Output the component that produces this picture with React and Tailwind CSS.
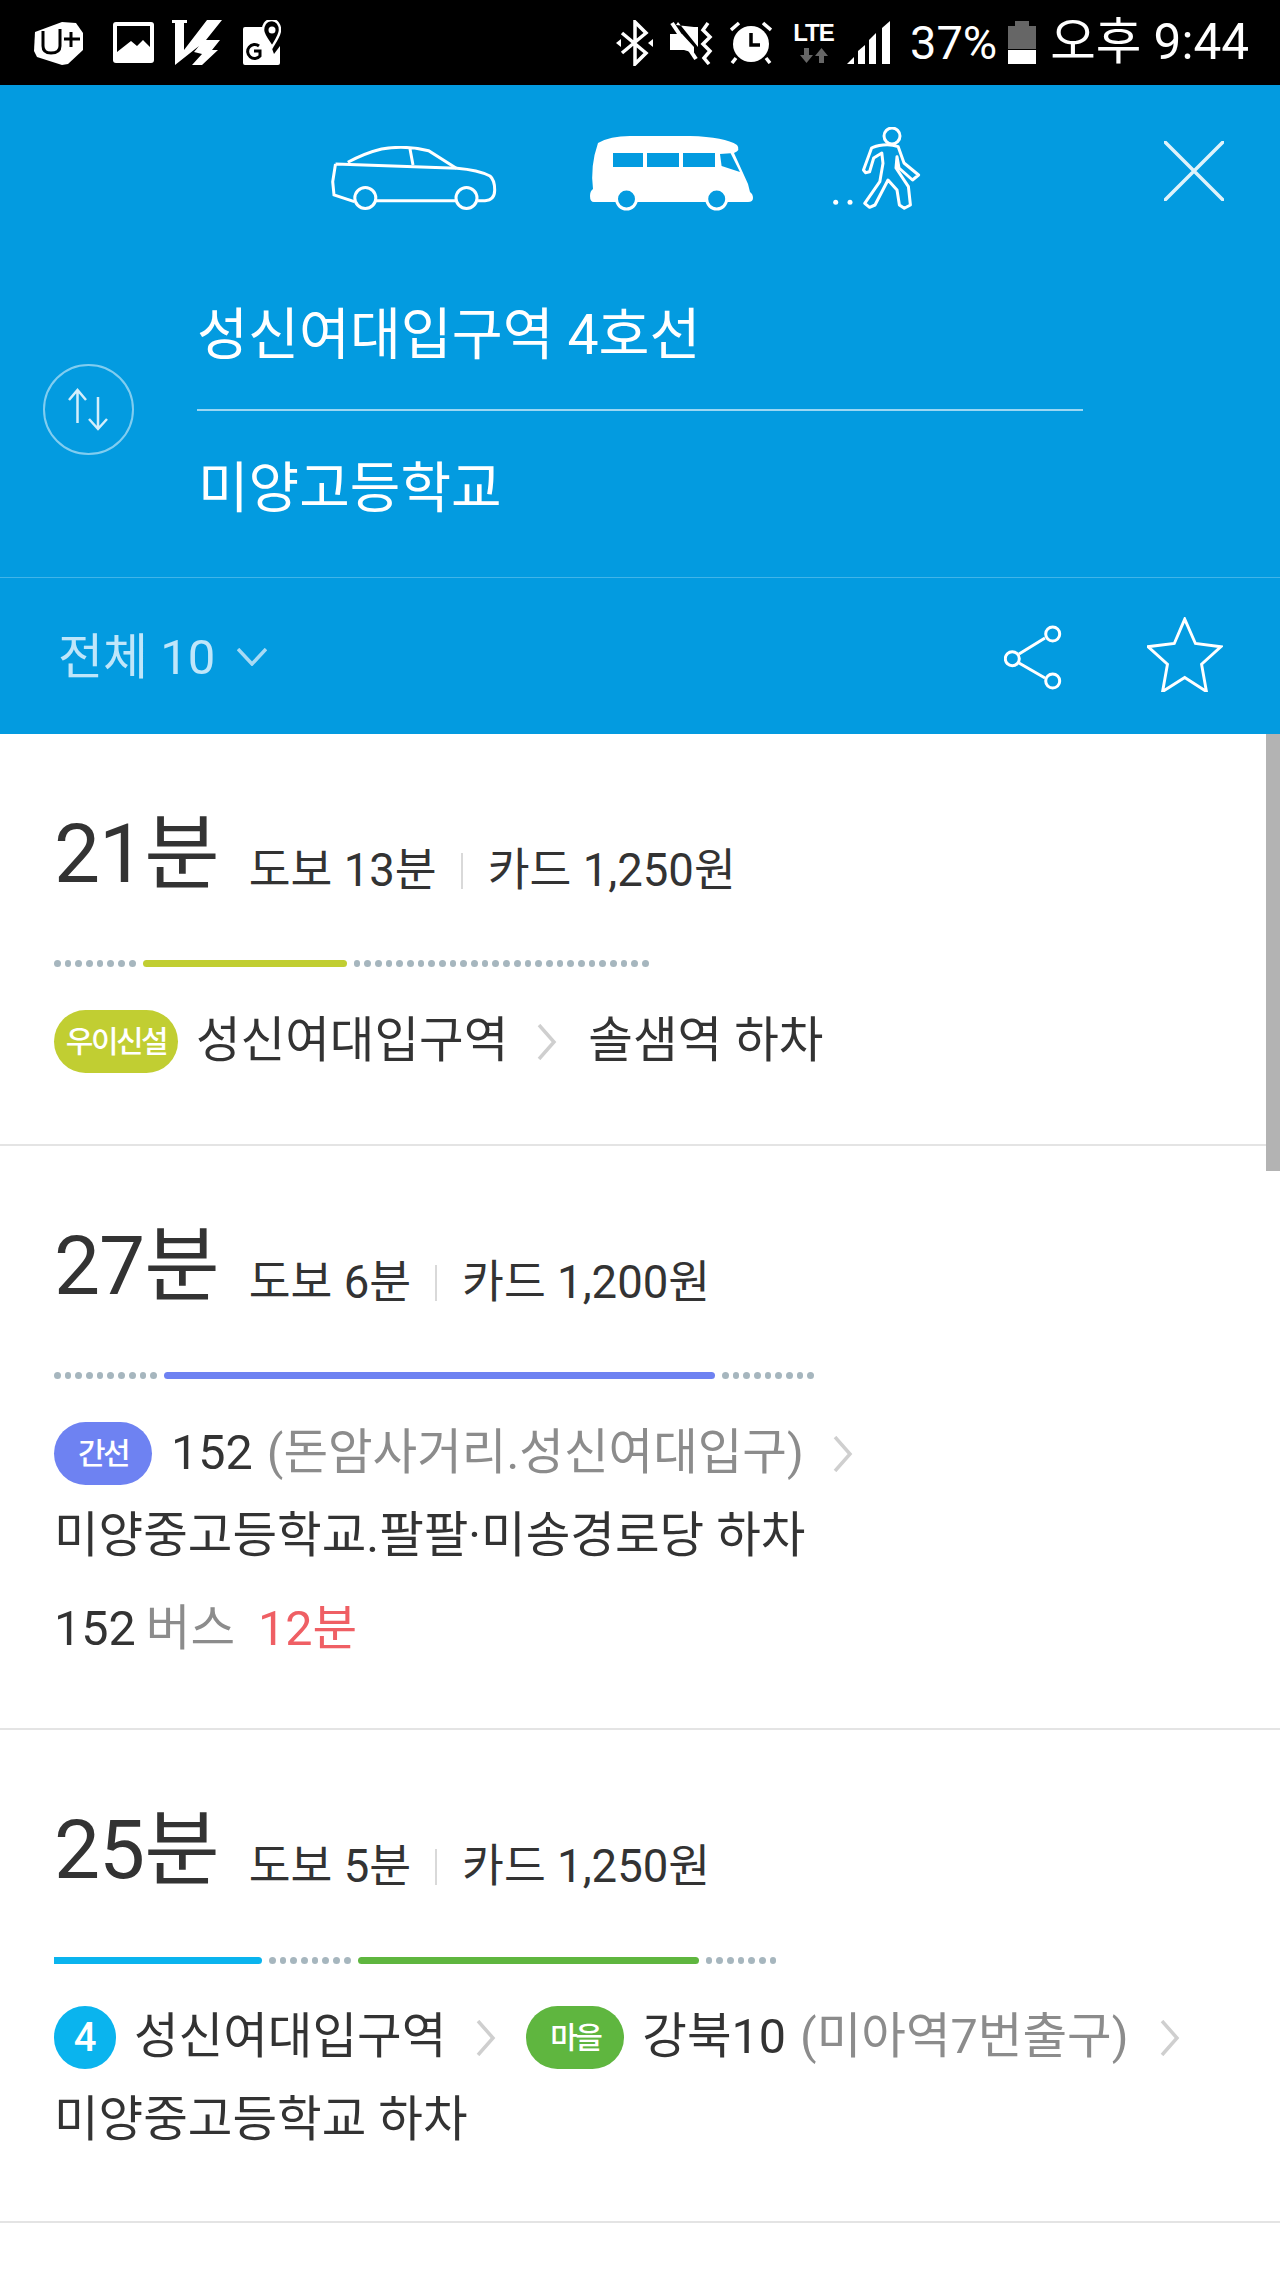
const FONT = "font-['Roboto','Noto_Sans_CJK_KR',sans-serif]";

const StatusIcons = () => (
  <div className="flex items-center h-[85px] bg-black text-white">
    <svg className="ml-[34px]" width="50" height="44" viewBox="0 0 50 44">
      <path d="M1 11 L28 1 L42 2 L49 12 L49 29 L34 43 L28 44 L3 36 L0 30 Z" fill="#fff" />
      <path d="M9 10 L9 25 Q9 32 17 32 Q26 32 26 25 L26 8" fill="none" stroke="#000" strokeWidth="3" />
      <path d="M30 18 L46 18 M37 11 L37 26" fill="none" stroke="#000" strokeWidth="3" />
    </svg>
    <svg className="ml-[29px]" width="41" height="41" viewBox="0 0 41 41">
      <rect x="0" y="0" width="41" height="41" rx="3" fill="#fff" />
      <path d="M4 4 H37 V25 L30 18 L24 24 L18 19 L4 30 Z" fill="#000" />
    </svg>
    <svg className="ml-[18px]" width="50" height="46" viewBox="0 0 50 46">
      <path d="M0 0 H15 V3 L12 3 L12 30 L35 0 H50 L34 20 L48 20 L40 30 L46 30 L30 45 H20 L30 34 L22 32 L27 26 L3 45 V3 H0 Z" fill="#fff" />
    </svg>
    <svg className="ml-[21px]" width="38" height="46" viewBox="0 0 38 46">
      <path d="M2 7 H21 L31 34 L37 26 V43 Q37 45 35 45 H2 Q0 45 0 43 V9 Q0 7 2 7 Z" fill="#fff" />
      <path d="M29 0 C22 0 20 6 20 10 C20 15 26 22 29 27 C32 22 37 15 37 10 C37 5 34 0 29 0 Z" fill="#000" stroke="#fff" strokeWidth="2.5" />
      <circle cx="29" cy="10" r="3.5" fill="#fff" />
      <path d="M16 26 A7 7 0 1 0 17 36 L17 31 L11 31" fill="none" stroke="#000" strokeWidth="3" />
    </svg>
    <svg className="ml-[333px]" width="40" height="46" viewBox="0 0 40 46" fill="none" stroke="#fff" strokeWidth="3.5">
      <path d="M8 13 L32 33 L21 44 V2 L32 13 L8 33" />
      <path d="M2 23 L7 19 V27 Z" fill="#fff" stroke="none" />
      <path d="M34 23 L39 19 V27 Z" fill="#fff" stroke="none" />
    </svg>
    <svg className="ml-[16px]" width="44" height="44" viewBox="0 0 44 44">
      <path d="M0 13 H6 L12 13 L24 26 V32 L14 29 H0 Z M6 4 L8 1 L28 26 V6 L24 6" fill="#fff" />
      <path d="M2 2 L26 38" stroke="#fff" strokeWidth="4" />
      <path d="M38 2 L33 9 L40 16 L33 23 L40 30 L34 37 L39 43" fill="none" stroke="#fff" strokeWidth="3.5" />
    </svg>
    <svg className="ml-[16px]" width="42" height="43" viewBox="0 0 42 43">
      <circle cx="21" cy="23" r="18" fill="#fff" />
      <path d="M21 12 V24 H30" fill="none" stroke="#000" strokeWidth="3.5" />
      <path d="M1 9 L9 2 M33 2 L41 9 M6 37 L2 42 M36 37 L40 42" stroke="#fff" strokeWidth="3.5" />
    </svg>
    <div className="ml-[19px] w-[45px] flex flex-col items-center">
      <div className="font-['Liberation_Sans',sans-serif] font-bold text-[24px] leading-[22px] tracking-[-1px]">LTE</div>
      <svg className="mt-[4px]" width="28" height="15" viewBox="0 0 28 15" fill="#666">
        <path d="M4 0 H9 V7 H13 L6.5 15 L0 7 H4 Z" />
        <path d="M19 15 H24 V8 H28 L21.5 0 L15 8 H19 Z" />
      </svg>
    </div>
    <svg className="ml-[11px]" width="44" height="43" viewBox="0 0 44 43" fill="#fff">
      <path d="M0 43 L7 36 V43 Z" />
      <path d="M11 30 L18 24 V43 H11 Z" />
      <path d="M22 19 L29 12 V43 H22 Z" />
      <path d="M35 7 L43 0 V43 H35 Z" />
    </svg>
    <span className={`ml-[19px] ${FONT} text-[47px] leading-none`}>37%</span>
    <svg className="ml-[11px]" width="28" height="43" viewBox="0 0 28 43">
      <path d="M0 5 H7 V0 H21 V5 H28 V28 H0 Z" fill="#666" />
      <rect x="0" y="29" width="28" height="14" fill="#fff" />
    </svg>
    <span className={`ml-[14px] ${FONT} text-[49.5px] leading-none whitespace-nowrap`}>오후 9:44</span>
  </div>
);

const Car = () => (
  <svg className="ml-[330px] mt-[61px]" width="167" height="64" viewBox="0 0 167 64" fill="none" stroke="#fff" strokeWidth="3">
    <path d="M5.5 18 L2.7 35.7 L4 49 L24.3 55.7 M45.5 54.7 H126 M147.5 54.7 H155 Q164.7 54 164.7 44 Q164.7 34 160 30 Q148 24 127 22.3 L5.5 18" />
    <path d="M17.8 16.3 Q35 7 51.6 3 Q75 -1 98.6 4.7 L126.3 22.3 M80 3 L83 19" />
    <ellipse cx="35.3" cy="52" rx="10.5" ry="10.5" />
    <ellipse cx="136.5" cy="52" rx="10.5" ry="10.5" />
  </svg>
);

const Bus = () => (
  <svg className="ml-[93px] mt-[51px]" width="163" height="75" viewBox="0 0 163 75">
    <path d="M4 66 Q0 66 0 60 Q0 55 3 53 Q0 30 8 7 Q20 0 40 0 L100 0 Q135 1 147 9 Q151 14 144 17 L158 48 L160 56 Q163 58 163 62 Q163 66 158 66 Z" fill="#fff" />
    <path d="M23 17 H53 V31 H23 Z M57 17 H89 V31 H57 Z M93 17 H125 V31 H93 Z M130 18 L140.6 17.3 L150 36 L131.6 30 Z" fill="#039be0" />
    <circle cx="36.5" cy="63" r="10" fill="#039be0" stroke="#fff" strokeWidth="3" />
    <circle cx="126.7" cy="63" r="10" fill="#039be0" stroke="#fff" strokeWidth="3" />
  </svg>
);

const Walker = () => (
  <svg className="ml-[80px] mt-[42px]" width="88" height="83" viewBox="0 0 88 83" fill="none" stroke="#fff" strokeWidth="3" strokeLinejoin="round">
    <circle cx="2.7" cy="75.3" r="2.5" fill="#fff" stroke="none" />
    <circle cx="17" cy="75.3" r="2.5" fill="#fff" stroke="none" />
    <circle cx="59" cy="9" r="8" />
    <path d="M50 18 Q42 19 38.6 21 L30.5 43 L32.5 45.7 L36.6 44.7 L40.7 31 L48.8 26 L50 36.3 L46.8 54.7 L31.7 76.3 L36.6 80.3 L42 78 L55 53 L64 63 L66.4 78 L71.3 81.3 L77.4 78 L75.4 59.7 L63 41 L64 29.7 L66 41 L79.5 53 L85.6 48 L71 36 L65.2 19.7 Q58 17 50 18 Z" />
  </svg>
);

const Close = () => (
  <svg className="ml-[243px] mt-[56px]" width="60" height="60" viewBox="0 0 60 60" stroke="#dff3fb" strokeWidth="3.5" strokeLinecap="round">
    <path d="M1 1 L59 59 M59 1 L1 59" />
  </svg>
);

const Swap = () => (
  <div className="w-[91px] h-[91px] mt-[90px] shrink-0 rounded-full border-2 border-white/50">
    <svg className="-ml-[2px] -mt-[2px]" width="91" height="91" viewBox="0 0 91 91" fill="none" stroke="#d4eefb" strokeWidth="2.5">
      <path d="M34.5 59 V26 M26 36 L34.5 26 L43 36" />
      <path d="M55 33 V65 M46 55 L55 65 L64 55" />
    </svg>
  </div>
);

const Header = () => (
  <div className={`bg-[#039be0] text-white h-[649px] ${FONT}`}>
    <div className="flex h-[189px]">
      <Car />
      <Bus />
      <Walker />
      <Close />
    </div>
    <div className="flex items-start h-[304px] border-b border-white/25 pl-[43px]">
      <Swap />
      <div className="ml-[63px] w-[886px]">
        <div className="h-[135px] pb-[12px] flex items-center text-[55.4px] leading-none whitespace-nowrap">성신여대입구역 4호선</div>
        <div className="h-[2px] bg-white/60"></div>
        <div className="h-[154px] pl-[1px] flex items-center text-[55px] leading-none whitespace-nowrap">미양고등학교</div>
      </div>
    </div>
    <div className="flex items-center h-[155px] pl-[58px]">
      <span className="text-[49px] mt-[3px] leading-none text-[#bfe6fa]">전체 10</span>
      <svg className="ml-[22px] mt-[2px]" width="30" height="18" viewBox="0 0 30 18" fill="none" stroke="#a8daf4" strokeWidth="3.5">
        <path d="M1 1 L15 16 L29 1" />
      </svg>
      <svg className="ml-[737px] mt-[5px]" width="58" height="66" viewBox="0 0 58 66" fill="none" stroke="#fff" strokeWidth="3">
        <path d="M15 29 L41 13 M15 38 L41 53" />
        <circle cx="48.7" cy="9" r="7" />
        <circle cx="8.3" cy="33.7" r="7" />
        <circle cx="48.7" cy="56" r="7" />
      </svg>
      <svg className="ml-[85px] -mt-[3px]" width="76" height="75" viewBox="0 0 78 76" fill="none" stroke="#fff" strokeWidth="3">
        <path d="M38.7 1.7 L49.7 26.7 L75.7 30 L56 48 L61 76 L38.7 61.7 L16 76 L21 48 L1 30 L28 26.7 Z" />
      </svg>
    </div>
  </div>
);

const Dots = ({ n }) => (
  <div className="flex gap-[4px] shrink-0">
    {Array.from({ length: n }).map((_, i) => (
      <span key={i} className="w-[6.7px] h-[7px] rounded-full bg-[#a6b6be]"></span>
    ))}
  </div>
);

const Chevron = () => (
  <svg className="shrink-0" width="20" height="36" viewBox="0 0 20 36" fill="none" stroke="#cfcfcf" strokeWidth="3.5">
    <path d="M2 1 L17 18 L2 35" />
  </svg>
);

const Badge = ({ bg, w, children }) => (
  <span className={`${bg} ${w} h-[63px] rounded-full flex items-center justify-center shrink-0 text-white text-[30px] font-medium tracking-[-2.5px] leading-none`}>
    {children}
  </span>
);

const Summary = ({ time, walk, fare }) => (
  <div className="flex items-center h-[80px] whitespace-nowrap">
    <span className="text-[82px] mt-[4px] leading-none text-[#333] tracking-[-1px]">{time}</span>
    <span className="ml-[30px] mt-[38px] text-[45.5px] leading-none text-[#333]">{walk}</span>
    <span className="ml-[24px] mt-[38px] w-[2px] h-[36px] bg-[#d9d9d9]"></span>
    <span className="ml-[25px] mt-[38px] text-[45.5px] leading-none text-[#333]">{fare}</span>
  </div>
);

const Route = ({ h, children, ...rest }) => (
  <div className={`${h} border-b-2 border-[#e4e4e4] pl-[54px] pt-[78px] ${FONT}`}>
    <Summary {...rest} />
    {children}
  </div>
);

export default function App() {
  return (
    <div className={`w-[1280px] min-h-[2275px] bg-white ${FONT}`}>
      <StatusIcons />
      <Header />
      <div className="relative">
        <div className="absolute right-0 top-0 w-[14px] h-[437px] bg-[#b3b3b3]"></div>

        <Route h="h-[412px]" time="21분" walk="도보 13분" fare="카드 1,250원">
          <div className="mt-[68px] flex items-center gap-[7px]">
            <Dots n={8} />
            <div className="w-[204px] h-[7px] rounded-full bg-[#c1ce32]"></div>
            <Dots n={28} />
          </div>
          <div className="mt-[43px] flex items-center h-[63px] text-[48.5px] leading-none text-[#333] whitespace-nowrap">
            <Badge bg="bg-[#c1ce32]" w="w-[124px]">우이신설</Badge>
            <span className="ml-[18px]">성신여대입구역</span>
            <span className="ml-[29px]"><Chevron /></span>
            <span className="ml-[31px]">솔샘역 하차</span>
          </div>
        </Route>

        <Route h="h-[584px]" time="27분" walk="도보 6분" fare="카드 1,200원">
          <div className="mt-[68px] flex items-center gap-[7px]">
            <Dots n={10} />
            <div className="w-[551px] h-[7px] rounded-full bg-[#6e82f2]"></div>
            <Dots n={9} />
          </div>
          <div className="mt-[43px] flex items-center h-[63px] text-[48.5px] leading-none text-[#333] whitespace-nowrap">
            <Badge bg="bg-[#6e82f2]" w="w-[98px]">간선</Badge>
            <span className="ml-[19px]">152</span>
            <span className="ml-[14px] text-[#8c8c8c]">(돈암사거리.성신여대입구)</span>
            <span className="ml-[29px]"><Chevron /></span>
          </div>
          <div className="mt-[20px] h-[63px] flex items-center text-[48.5px] leading-none text-[#333] whitespace-nowrap">미양중고등학교.팔팔·미송경로당 하차</div>
          <div className="mt-[30px] h-[63px] flex items-center text-[48.5px] leading-none text-[#333] whitespace-nowrap">
            <span>152</span>
            <span className="ml-[10px] text-[#8c8c8c]">버스</span>
            <span className="ml-[23px] text-[#ef5f64]">12분</span>
          </div>
        </Route>

        <Route h="h-[493px]" time="25분" walk="도보 5분" fare="카드 1,250원">
          <div className="mt-[69px] flex items-center gap-[7px]">
            <div className="w-[208px] h-[7px] rounded-r-full bg-[#0ab4ee]"></div>
            <Dots n={8} />
            <div className="w-[341px] h-[7px] rounded-full bg-[#5fb63f]"></div>
            <Dots n={7} />
          </div>
          <div className="mt-[42px] flex items-center h-[63px] text-[48.5px] leading-none text-[#333] whitespace-nowrap">
            <span className="w-[62px] h-[63px] rounded-full bg-[#0ab4ee] flex items-center justify-center text-white text-[40px] font-medium shrink-0">4</span>
            <span className="ml-[18px]">성신여대입구역</span>
            <span className="ml-[30px]"><Chevron /></span>
            <span className="ml-[30px]"><Badge bg="bg-[#5fb63f]" w="w-[98px]">마을</Badge></span>
            <span className="ml-[18px]">강북10</span>
            <span className="ml-[14px] text-[#8c8c8c]">(미아역7번출구)</span>
            <span className="ml-[31px]"><Chevron /></span>
          </div>
          <div className="mt-[20px] h-[63px] flex items-center text-[48.5px] leading-none text-[#333] whitespace-nowrap">미양중고등학교 하차</div>
        </Route>
      </div>
    </div>
  );
}
